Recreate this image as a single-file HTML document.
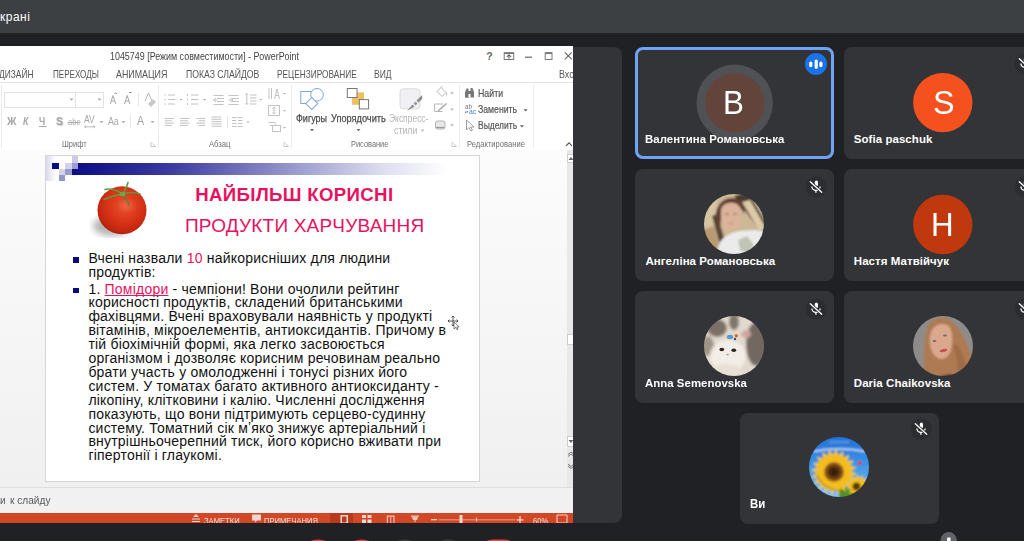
<!DOCTYPE html>
<html><head><meta charset="utf-8">
<style>
*{margin:0;padding:0;box-sizing:border-box}
html,body{width:1024px;height:541px;overflow:hidden;background:#202124;font-family:"Liberation Sans",sans-serif;position:relative}
.a{position:absolute}
.t{position:absolute;white-space:nowrap;line-height:1;transform-origin:0 0}
svg{position:absolute;overflow:visible}
</style></head><body>
<div class="a" style="left:0.00px;top:0.00px;width:1024.00px;height:33.00px;background:#3c4043"></div>
<div class="t" style="left:-7.20px;top:10.54px;font-size:12px;color:#fff;transform:scaleX(1.0);font-weight:400;letter-spacing:0.5px">екранi</div>
<div class="a" style="left:-10.00px;top:46.50px;width:632.00px;height:476.00px;background:#333438;border-radius:8px"></div>
<div class="a" style="left:0;top:0;width:573px;height:523px;overflow:hidden">
<div class="a" style="left:0.00px;top:46.00px;width:573.00px;height:477.00px;background:#fff"></div>
<div class="t" style="left:110.30px;top:51.21px;font-size:10.5px;color:#444;transform:scaleX(0.849);font-weight:400;">1045749 [Режим совместимости] - PowerPoint</div>
<div class="t" style="left:486.20px;top:50.91px;font-size:10.5px;color:#666;transform:scaleX(1.0);font-weight:700;">?</div>
<svg style="left:0;top:0" width="573" height="523"><rect x="504.2" y="52.8" width="9.5" height="6.7" fill="none" stroke="#777" stroke-width="1"/><path d="M504.2 53.2 h9.5" stroke="#777" stroke-width="1.6"/><path d="M508.95 58.8 v-4 M506.8 56.8 l2.15 -2.1 l2.15 2.1" fill="none" stroke="#666" stroke-width="1.1"/><path d="M525 57.2 H532" stroke="#666" stroke-width="1.2"/><rect x="545.2" y="52.7" width="6.8" height="6.8" fill="none" stroke="#777" stroke-width="1"/><path d="M545.2 53.3 H552" stroke="#777" stroke-width="1.5"/><path d="M564.8 52.3 L571.8 59.3 M571.8 52.3 L564.8 59.3" stroke="#666" stroke-width="1.1"/></svg>
<div class="t" style="left:-0.80px;top:68.91px;font-size:10.5px;color:#555;transform:scaleX(0.8);font-weight:400;">ДИЗАЙН</div>
<div class="t" style="left:52.60px;top:68.91px;font-size:10.5px;color:#555;transform:scaleX(0.77);font-weight:400;">ПЕРЕХОДЫ</div>
<div class="t" style="left:116.00px;top:68.91px;font-size:10.5px;color:#555;transform:scaleX(0.844);font-weight:400;">АНИМАЦИЯ</div>
<div class="t" style="left:185.60px;top:68.91px;font-size:10.5px;color:#555;transform:scaleX(0.825);font-weight:400;">ПОКАЗ СЛАЙДОВ</div>
<div class="t" style="left:276.80px;top:68.91px;font-size:10.5px;color:#555;transform:scaleX(0.79);font-weight:400;">РЕЦЕНЗИРОВАНИЕ</div>
<div class="t" style="left:374.40px;top:68.91px;font-size:10.5px;color:#555;transform:scaleX(0.81);font-weight:400;">ВИД</div>
<div class="t" style="left:559.00px;top:68.91px;font-size:10.5px;color:#555;transform:scaleX(0.85);font-weight:400;">Вход</div>
<div class="a" style="left:0.00px;top:82.00px;width:573.00px;height:1.00px;background:#e3e3e3"></div>
<div class="a" style="left:0.00px;top:149.50px;width:573.00px;height:1.00px;background:#d9d9d9"></div>
<div class="a" style="left:0.50px;top:85.00px;width:1.00px;height:63.00px;background:#ececec"></div>
<div class="a" style="left:158.00px;top:85.00px;width:1.00px;height:63.00px;background:#ececec"></div>
<div class="a" style="left:291.00px;top:85.00px;width:1.00px;height:63.00px;background:#ececec"></div>
<div class="a" style="left:459.00px;top:85.00px;width:1.00px;height:63.00px;background:#ececec"></div>
<div class="a" style="left:533.00px;top:85.00px;width:1.00px;height:63.00px;background:#ececec"></div>
<div class="a" style="left:3.50px;top:91.50px;width:72.00px;height:16.50px;border:1px solid #e2e2e2;background:#fff"></div>
<div class="a" style="left:75.00px;top:91.50px;width:29.00px;height:16.50px;border:1px solid #e2e2e2;background:#fff"></div>
<svg style="left:0;top:0" width="573" height="523"><path d="M69.5 98.5 h4 l-2 2.2z M97.5 98.5 h4 l-2 2.2z" fill="#aaa"/><path d="M99.5 121 h4 l-2 2.2z M121.5 121 h4 l-2 2.2z M150.5 121 h4 l-2 2.2z" fill="#b0b0b0"/><path d="M110.3 104 l2.7 -8.5 l2.7 8.5 M111.5 101 h3" fill="none" stroke="#a8a8a8" stroke-width="1"/><path d="M114.5 94 l1.2 -1.3 l1.2 1.3" fill="none" stroke="#888" stroke-width="0.9"/><path d="M124.5 104 l2.7 -8.5 l2.7 8.5 M125.7 101 h3" fill="none" stroke="#a8a8a8" stroke-width="1"/><path d="M129 92.5 h2.5" stroke="#888" stroke-width="1"/><path d="M138.5 93 v13" stroke="#e6e6e6" stroke-width="1"/><path d="M145 101 l3.5 -8 l3.5 8" fill="none" stroke="#b5b5b5" stroke-width="1"/><path d="M148 104 l5 -5 l3 3 l-5 5 z" fill="#c8c8c8"/><path d="M39 126.5 h7.5" stroke="#aaa" stroke-width="1"/><path d="M67.5 122.5 h13" stroke="#aaa" stroke-width="1"/><path d="M84.5 126.8 h10.5 M84.5 126.8 l1.6 -1.2 M84.5 126.8 l1.6 1.2 M95 126.8 l-1.6 -1.2 M95 126.8 l-1.6 1.2" fill="none" stroke="#aaa" stroke-width="0.8"/><path d="M130.5 115 v13" stroke="#e6e6e6" stroke-width="1"/><path d="M151 142 v4.5 h4.5 M152.5 143.5 l3 3" fill="none" stroke="#bbb" stroke-width="0.8"/><path d="M284 142 v4.5 h4.5 M285.5 143.5 l3 3" fill="none" stroke="#bbb" stroke-width="0.8"/><path d="M452 142 v4.5 h4.5 M453.5 143.5 l3 3" fill="none" stroke="#bbb" stroke-width="0.8"/></svg>
<div class="t" style="left:6.60px;top:116.49px;font-size:11px;color:#a5a5a5;transform:scaleX(0.95);font-weight:700;">Ж</div>
<div class="t" style="left:23.40px;top:116.49px;font-size:11px;color:#a5a5a5;transform:scaleX(0.8);font-weight:700;font-style:italic">К</div>
<div class="t" style="left:39.30px;top:115.99px;font-size:11px;color:#a8a8a8;transform:scaleX(0.8);font-weight:700;">Ч</div>
<div class="t" style="left:55.50px;top:116.07px;font-size:11.5px;color:#a5a5a5;transform:scaleX(0.9);font-weight:700;text-shadow:1px 1px 1px #ccc">S</div>
<div class="t" style="left:68.00px;top:117.88px;font-size:9px;color:#b0b0b0;transform:scaleX(0.85);font-weight:400;">abc</div>
<div class="t" style="left:84.40px;top:115.03px;font-size:10px;color:#a5a5a5;transform:scaleX(0.85);font-weight:400;">AV</div>
<div class="t" style="left:107.50px;top:116.49px;font-size:11px;color:#a8a8a8;transform:scaleX(0.8);font-weight:400;">Aa</div>
<div class="t" style="left:137.20px;top:115.22px;font-size:12.5px;color:#a0a0a0;transform:scaleX(0.85);font-weight:400;">A</div>
<div class="t" style="left:61.70px;top:139.68px;font-size:9px;color:#707070;transform:scaleX(0.83);font-weight:400;">Шрифт</div>
<svg style="left:0;top:0" width="573" height="523"><g stroke="#c2c2c2" stroke-width="1" fill="none"><path d="M164.5 95 h1.5 M168 95 h7"/><path d="M164.5 99.5 h1.5 M168 99.5 h7"/><path d="M164.5 104 h1.5 M168 104 h7"/><path d="M187.5 94 v2 M191 95 h7.5"/><path d="M187.5 98.5 v2 M191 99.5 h7.5"/><path d="M187.5 103 v2 M191 104 h7.5"/><path d="M213.5 95.5 h10 M217 98.5 h7 M217 101.5 h7 M213.5 104.5 h10 M213.5 100 l2.5 -2 M213.5 100 l2.5 2 M213.5 100 h4"/><path d="M228.5 95.5 h10 M232 98.5 h7 M232 101.5 h7 M228.5 104.5 h10 M233 100 l-2.5 -2 M233 100 l-2.5 2 M228.5 100 h4.5"/><path d="M250 95 h6.5 M250 98 h6.5 M250 101 h6.5 M250 104 h6.5 M246.8 93.5 v11 M245.3 95 l1.5 -1.5 l1.5 1.5 M245.3 103 l1.5 1.5 l1.5 -1.5"/><path d="M269 88 v11 M271.5 88 v11 M274.5 99 l2.5 -10 l2.5 10 M275.5 95.5 h3"/><rect x="268.5" y="105.5" width="11" height="10" /><path d="M274 107 v7 M272.5 108.5 l1.5 -1.5 l1.5 1.5 M272.5 112.5 l1.5 1.5 l1.5 -1.5"/><path d="M268.5 122.5 h6 l1.5 2 M270 125.5 h4"/><rect x="272.5" y="125.5" width="8" height="6"/><path d="M164.8 118.5 h9"/><path d="M164.8 120.8 h7"/><path d="M164.8 123.1 h9"/><path d="M164.8 125.4 h7"/><path d="M180 118.5 h9.5"/><path d="M180 120.8 h8.0"/><path d="M180 123.1 h9.5"/><path d="M180 125.4 h8.0"/><path d="M196.6 118.5 h8.5"/><path d="M198.6 120.8 h6.5"/><path d="M196.6 123.1 h8.5"/><path d="M198.6 125.4 h6.5"/><path d="M211.5 117 h10"/><path d="M211.5 119.3 h10"/><path d="M211.5 121.6 h10"/><path d="M211.5 123.9 h10"/><path d="M211.5 126.2 h10"/><path d="M227.5 116 v12" stroke="#e6e6e6"/><path d="M232 117.5 h4.5 M238 117.5 h4.5"/><path d="M232 120.5 h4.5 M238 120.5 h4.5"/><path d="M232 123.5 h4.5 M238 123.5 h4.5"/><path d="M232 126.5 h4.5 M238 126.5 h4.5"/></g><g fill="#aaa"><path d="M179.5 99 h3 l-1.5 1.6z M203 99 h3 l-1.5 1.6z M259.5 99 h3 l-1.5 1.6z M283 93 h3 l-1.5 1.6z M283 110 h3 l-1.5 1.6z M283 127 h3 l-1.5 1.6z M246.5 121.5 h3 l-1.5 1.6z"/></g></svg>
<div class="t" style="left:209.00px;top:139.68px;font-size:9px;color:#707070;transform:scaleX(0.85);font-weight:400;">Абзац</div>
<svg style="left:0;top:0" width="573" height="523"><rect x="300.8" y="91.5" width="12.3" height="12" fill="#fff" stroke="#7ea7d6" stroke-width="1"/><circle cx="317" cy="94.8" r="6.3" fill="#fff" stroke="#7ea7d6" stroke-width="1"/><rect x="307.5" y="99.2" width="8.5" height="8.5" fill="#fff" stroke="#7ea7d6" stroke-width="1" transform="rotate(45 311.75 103.45)"/><rect x="352" y="92.3" width="12" height="12.5" fill="#f0c060"/><rect x="347.3" y="88.5" width="9.7" height="9" fill="#fff" stroke="#777" stroke-width="1"/><rect x="359.3" y="99.6" width="9.3" height="9.3" fill="#fff" stroke="#777" stroke-width="1"/><rect x="400" y="88.8" width="20" height="20" rx="3.5" fill="#f0eff3" stroke="#dadada" stroke-width="1"/><path d="M407 111 L412.5 104.5 L414.5 106.5 Z" fill="#8c8c8c"/><path d="M413.5 103.5 l2 -2 l2 2 l-2 2z" fill="#9a9a9a"/><path d="M416.5 100.5 L422.2 95 L422.2 99 L418.5 102.5 Z" fill="#8c8c8c"/><path d="M437 91.5 l4 -4 l5 5 l-4 4 z M441 87.5 l1.5 -1.5" fill="#fff" stroke="#b8b8b8" stroke-width="1"/><path d="M446.3 92.5 q1 2 0 3" fill="none" stroke="#b8b8b8" stroke-width="1"/><path d="M443 104 h-8.5 v7.5 h8" fill="none" stroke="#b8b8b8" stroke-width="1"/><path d="M437.5 110.5 l8.5 -7.5 l1 1 l-8.5 7.5 z" fill="#a8a8a8"/><rect x="435.5" y="121" width="9.5" height="8" rx="2" fill="#e8e8e8" stroke="#b5b5b5" stroke-width="1"/><path d="M436 127.5 h8.5" stroke="#999" stroke-width="1.2"/><path d="M450 92.3 h4 l-2 2.2z M450 108.5 h4 l-2 2.2z M450 124.2 h4 l-2 2.2z" fill="#bbb"/><path d="M310 129 h4 l-2 2.2z M356.5 129 h4 l-2 2.2z" fill="#666"/><path d="M420.5 129.5 h4 l-2 2.2z" fill="#bbb"/></svg>
<div class="t" style="left:296.00px;top:113.49px;font-size:11px;color:#4a4a4a;transform:scaleX(0.82);font-weight:400;-webkit-text-stroke:0.25px #4a4a4a">Фигуры</div>
<div class="t" style="left:331.00px;top:113.49px;font-size:11px;color:#4a4a4a;transform:scaleX(0.837);font-weight:400;-webkit-text-stroke:0.25px #4a4a4a">Упорядочить</div>
<div class="t" style="left:388.90px;top:113.49px;font-size:11px;color:#b5b5b5;transform:scaleX(0.77);font-weight:400;">Экспресс-</div>
<div class="t" style="left:394.40px;top:124.69px;font-size:11px;color:#b5b5b5;transform:scaleX(0.8);font-weight:400;">стили</div>
<div class="t" style="left:350.60px;top:139.68px;font-size:9px;color:#707070;transform:scaleX(0.825);font-weight:400;">Рисование</div>
<svg style="left:0;top:0" width="573" height="523"><path d="M465 97.5 v-5 l1.5 -4 h2 v9.5z M470.5 97.5 v-9.5 h2 l1.5 4 v5.5z M468.5 91 h2 v3 h-2z" fill="#777"/><path d="M466.5 120 v10 l2.5 -2.5 l2 3.5 l1.5 -1 l-2 -3 h3.5 z" fill="#fff" stroke="#888" stroke-width="0.8"/><path d="M465 112 h3 l-1.2 -1.2 M465 112 l1.2 1.2" fill="none" stroke="#4a7bd0" stroke-width="0.8"/><path d="M523.5 109.3 h4.2 l-2.1 2.3z M519.8 125.3 h4.2 l-2.1 2.3z" fill="#666"/><path d="M566 145.8 l3 -3 l3 3" fill="none" stroke="#555" stroke-width="1.2"/></svg>
<div class="t" style="left:464.50px;top:103.07px;font-size:7px;color:#777;transform:scaleX(0.9);font-weight:400;">ab</div>
<div class="t" style="left:468.50px;top:108.45px;font-size:7.5px;color:#4a7bd0;transform:scaleX(0.9);font-weight:400;">ac</div>
<div class="t" style="left:477.70px;top:87.69px;font-size:11px;color:#555;transform:scaleX(0.8);font-weight:400;-webkit-text-stroke:0.2px #555">Найти</div>
<div class="t" style="left:477.70px;top:104.19px;font-size:11px;color:#555;transform:scaleX(0.79);font-weight:400;-webkit-text-stroke:0.2px #555">Заменить</div>
<div class="t" style="left:477.70px;top:120.19px;font-size:11px;color:#555;transform:scaleX(0.77);font-weight:400;-webkit-text-stroke:0.2px #555">Выделить</div>
<div class="t" style="left:466.60px;top:139.68px;font-size:9px;color:#707070;transform:scaleX(0.845);font-weight:400;">Редактирование</div>
<div class="a" style="left:0.00px;top:150.00px;width:573.00px;height:337.00px;background:linear-gradient(#fcfcfc,#f0f0f0)"></div>
<div class="a" style="left:566.50px;top:150.00px;width:6.50px;height:337.00px;background:#e8e8e8"></div>
<div class="a" style="left:566.60px;top:154.20px;width:7.00px;height:9.00px;background:#fff;border:1px solid #cfcfcf"></div>
<div class="a" style="left:566.60px;top:333.50px;width:7.00px;height:11.20px;background:#fff;border:1px solid #cfcfcf"></div>
<div class="a" style="left:566.60px;top:436.00px;width:7.00px;height:10.50px;background:#fff;border:1px solid #cfcfcf"></div>
<svg style="left:0;top:0" width="573" height="523"><path d="M568.5 160 l2.5 -3 l2.5 3z M568.5 440 l2.5 3 l2.5 -3z" fill="#666"/><path d="M568 454.5 l3 -2.5 l3 2.5 M568 456.5 l3 -2.5 l3 2.5 M568 464 l3 2.5 l3 -2.5 M568 466 l3 2.5 l3 -2.5" fill="none" stroke="#777" stroke-width="1"/></svg>
<div class="a" style="left:45.00px;top:155.00px;width:434.50px;height:326.50px;background:#fff;border:1px solid #d6d6d6"></div>
<div class="a" style="left:46.00px;top:156.00px;width:10.00px;height:25.00px;background:linear-gradient(90deg,#d9d9ee,#ffffff)"></div>
<div class="a" style="left:51.80px;top:163.00px;width:7.10px;height:6.20px;background:#0a0a82"></div>
<div class="a" style="left:71.80px;top:155.80px;width:6.10px;height:7.20px;background:#cbcbe6"></div>
<div class="a" style="left:65.40px;top:163.00px;width:6.40px;height:6.20px;background:#d2d2ea"></div>
<div class="a" style="left:71.80px;top:163.00px;width:6.10px;height:6.20px;background:#9d9dd0"></div>
<div class="a" style="left:59.00px;top:169.20px;width:6.40px;height:5.80px;background:#d3d3ea"></div>
<div class="a" style="left:65.40px;top:169.20px;width:6.40px;height:5.80px;background:#9a9acd"></div>
<div class="a" style="left:59.00px;top:175.00px;width:6.40px;height:6.00px;background:#9595ca"></div>
<div class="a" style="left:77.80px;top:163.00px;width:370.00px;height:6.20px;background:linear-gradient(90deg,#0c0c85 0%,#3a3aa0 25%,#8f8fc8 55%,#dcdcef 82%,#ffffff 100%)"></div>
<div class="a" style="left:71.80px;top:169.20px;width:376.00px;height:5.60px;background:linear-gradient(90deg,#0c0c85 0%,#3a3aa0 25%,#8f8fc8 55%,#dcdcef 82%,#ffffff 100%)"></div>
<svg style="left:0;top:0" width="573" height="523"><defs><radialGradient id="tg" cx="0.55" cy="0.4" r="0.65"><stop offset="0" stop-color="#e85230"/><stop offset="0.5" stop-color="#da3519"/><stop offset="0.85" stop-color="#c0260e"/><stop offset="1" stop-color="#9c1d0a"/></radialGradient><filter id="tb"><feGaussianBlur stdDeviation="3"/></filter><filter id="tb2"><feGaussianBlur stdDeviation="0.5"/></filter></defs><ellipse cx="112" cy="226" rx="19" ry="10" fill="#9c9c9c" opacity="0.75" filter="url(#tb)"/><ellipse cx="122" cy="210.3" rx="24.5" ry="24" fill="url(#tg)"/><ellipse cx="127" cy="206" rx="7" ry="5" fill="#f88a6a" opacity="0.35" filter="url(#tb)"/><g filter="url(#tb2)" fill="none" stroke="#5d9c3c" stroke-linecap="round"><path d="M122.5 194 C118 190 110 188 105 189.5" stroke-width="1.6"/><path d="M122.5 194 C126 190 127 186 128 182.5" stroke-width="1.6"/><path d="M122.5 194 C128 192 134 192 140 194" stroke-width="1.6"/><path d="M122.5 194 C116 195 110 197 104 199.5" stroke-width="1.4"/><path d="M122.5 194 C125 197 127 201 129 205" stroke-width="1.5" stroke="#4f8a30"/></g><ellipse cx="122.5" cy="194" rx="3" ry="2.2" fill="#6aa84a"/></svg>
<div class="t" style="left:195.20px;top:185.56px;font-size:18.6px;color:#e8115f;transform:scaleX(1.0);font-weight:700;letter-spacing:0.35px">НАЙБІЛЬШ КОРИСНІ</div>
<div class="t" style="left:184.90px;top:216.42px;font-size:19px;color:#e8115f;transform:scaleX(1.0);font-weight:400;letter-spacing:0.2px">ПРОДУКТИ ХАРЧУВАННЯ</div>
<div class="a" style="left:72.70px;top:257.10px;width:6.20px;height:5.60px;background:#0a0a80"></div>
<div class="a" style="left:72.70px;top:287.60px;width:6.20px;height:5.40px;background:#0a0a80"></div>
<div class="t" style="left:88.40px;top:251.05px;font-size:14px;color:#111;transform:scaleX(1.0);font-weight:400;letter-spacing:0.21px">Вчені назвали <span style="color:#e8115f">10</span> найкорисніших для людини</div>
<div class="t" style="left:88.40px;top:264.55px;font-size:14px;color:#111;transform:scaleX(1.0);font-weight:400;letter-spacing:0.21px">продуктів:</div>
<div class="t" style="left:88.40px;top:281.55px;font-size:14px;color:#111;transform:scaleX(1.0);font-weight:400;letter-spacing:0.21px">1. <span style="color:#e8115f;text-decoration:underline;text-decoration-thickness:1.2px;text-underline-offset:1.3px;text-decoration-skip-ink:none">Помідори</span> - чемпіони! Вони очолили рейтинг</div>
<div class="t" style="left:88.40px;top:295.45px;font-size:14px;color:#111;transform:scaleX(1.0);font-weight:400;letter-spacing:0.21px">корисності продуктів, складений британськими</div>
<div class="t" style="left:88.40px;top:309.35px;font-size:14px;color:#111;transform:scaleX(1.0);font-weight:400;letter-spacing:0.21px">фахівцями. Вчені враховували наявність у продукті</div>
<div class="t" style="left:88.40px;top:323.25px;font-size:14px;color:#111;transform:scaleX(1.0);font-weight:400;letter-spacing:0.21px">вітамінів, мікроелементів, антиоксидантів. Причому в</div>
<div class="t" style="left:88.40px;top:337.15px;font-size:14px;color:#111;transform:scaleX(1.0);font-weight:400;letter-spacing:0.21px">тій біохімічній формі, яка легко засвоюється</div>
<div class="t" style="left:88.40px;top:351.05px;font-size:14px;color:#111;transform:scaleX(1.0);font-weight:400;letter-spacing:0.21px">організмом і дозволяє корисним речовинам реально</div>
<div class="t" style="left:88.40px;top:364.95px;font-size:14px;color:#111;transform:scaleX(1.0);font-weight:400;letter-spacing:0.21px">брати участь у омолодженні і тонусі різних його</div>
<div class="t" style="left:88.40px;top:378.85px;font-size:14px;color:#111;transform:scaleX(1.0);font-weight:400;letter-spacing:0.21px">систем. У томатах багато активного антиоксиданту -</div>
<div class="t" style="left:88.40px;top:392.75px;font-size:14px;color:#111;transform:scaleX(1.0);font-weight:400;letter-spacing:0.21px">лікопіну, клітковини і калію. Численні дослідження</div>
<div class="t" style="left:88.40px;top:406.65px;font-size:14px;color:#111;transform:scaleX(1.0);font-weight:400;letter-spacing:0.21px">показують, що вони підтримують серцево-судинну</div>
<div class="t" style="left:88.40px;top:420.55px;font-size:14px;color:#111;transform:scaleX(1.0);font-weight:400;letter-spacing:0.21px">систему. Томатний сік мʼяко знижує артеріальний і</div>
<div class="t" style="left:88.40px;top:434.45px;font-size:14px;color:#111;transform:scaleX(1.0);font-weight:400;letter-spacing:0.21px">внутрішньочерепний тиск, його корисно вживати при</div>
<div class="t" style="left:88.40px;top:448.35px;font-size:14px;color:#111;transform:scaleX(1.0);font-weight:400;letter-spacing:0.21px">гіпертонії і глаукомі.</div>
<svg style="left:0;top:0" width="573" height="523"><path d="M453 316 v10 M448 321 h10 M451.5 317.5 l1.5 -1.5 l1.5 1.5 M451.5 324.5 l1.5 1.5 l1.5 -1.5 M449.5 319.5 l-1.5 1.5 l1.5 1.5 M456.5 319.5 l1.5 1.5 l-1.5 1.5" stroke="#333" stroke-width="0.8" fill="none"/><path d="M454 322 v7 l1.7 -1.7 l1.3 2.5 l1 -0.5 l-1.2 -2.4 h2.4z" fill="#fff" stroke="#333" stroke-width="0.6"/></svg>
<div class="a" style="left:0.00px;top:487.00px;width:573.00px;height:1.00px;background:#dedede"></div>
<div class="a" style="left:0.00px;top:488.00px;width:573.00px;height:24.50px;background:#f1f1f1"></div>
<div class="t" style="left:-33.31px;top:494.69px;font-size:11px;color:#5a5a5a;transform:scaleX(0.92);font-weight:400;">Заметки</div>
<div class="t" style="left:9.70px;top:494.69px;font-size:11px;color:#5a5a5a;transform:scaleX(0.92);font-weight:400;">к слайду</div>
<div class="a" style="left:0.00px;top:512.50px;width:573.00px;height:10.50px;background:#d24726"></div>
<div class="a" style="left:330.00px;top:512.50px;width:23.40px;height:10.50px;background:#b93a1c"></div>
<svg style="left:0;top:0" width="573" height="523"><g fill="#f5d5cb"><path d="M192 521 h8 v1 h-8z M192 518.5 h8 v1 h-8z M193 517 l3 -3 l3 3z"/><path d="M252 514.5 h9 v6 h-4 l-2 2 v-2 h-3z"/><path d="M340.5 515 h7.5 v8 h-7.5z M342 516.5 v6 h4.5 v-6z" fill="#f5d5cb" fill-rule="evenodd"/><path d="M362 515 h4 v3 h-4z M367.5 515 h4 v3 h-4z M362 519.5 h4 v3.5 h-4z M367.5 519.5 h4 v3.5 h-4z"/><path d="M386.8 515.5 h7.8 v7.5 h-7.8z M388 516.7 v6.3 h2.2 v-6.3z M391.2 516.7 v6.3 h2.2 v-6.3z" fill-rule="evenodd" opacity="0.85"/><path d="M411 515.5 h8 v1.3 h-8z M412 517 h6 l-1 3 h-4z M414.5 520 h1 v2 h-1z" opacity="0.9"/><path d="M431 519 h6 v1.3 h-6z"/><path d="M438.5 519.5 h76.5 v0.8 h-76.5z" opacity="0.85"/><path d="M459.5 515 h3 v8 h-3z"/><path d="M476 517.5 h0.9 v4 h-0.9z"/><path d="M516.5 519.2 h7 v1.3 h-7z M519.4 516 h1.3 v7.5 h-1.3z"/><path d="M557 515 h10 v8 h-10z" fill="none" stroke="#f5d5cb" stroke-width="1"/></g></svg>
<div class="t" style="left:203.80px;top:516.46px;font-size:9.5px;color:#f8e0d8;transform:scaleX(0.8);font-weight:400;">ЗАМЕТКИ</div>
<div class="t" style="left:264.00px;top:516.46px;font-size:9.5px;color:#f8e0d8;transform:scaleX(0.8);font-weight:400;">ПРИМЕЧАНИЯ</div>
<div class="t" style="left:533.30px;top:516.46px;font-size:9.5px;color:#f8e0d8;transform:scaleX(0.8);font-weight:400;">60%</div>
</div>
<div class="a" style="left:635.00px;top:47.00px;width:199.00px;height:111.50px;background:#333438;border-radius:8px"></div>
<div class="a" style="left:844.00px;top:47.00px;width:199.00px;height:111.50px;background:#333438;border-radius:8px"></div>
<div class="a" style="left:635.00px;top:169.00px;width:199.00px;height:111.50px;background:#333438;border-radius:8px"></div>
<div class="a" style="left:844.00px;top:169.00px;width:199.00px;height:111.50px;background:#333438;border-radius:8px"></div>
<div class="a" style="left:635.00px;top:291.00px;width:199.00px;height:111.50px;background:#333438;border-radius:8px"></div>
<div class="a" style="left:844.00px;top:291.00px;width:199.00px;height:111.50px;background:#333438;border-radius:8px"></div>
<div class="a" style="left:740.00px;top:412.50px;width:199.00px;height:111.50px;background:#333438;border-radius:8px"></div>
<div class="a" style="left:635.00px;top:46.50px;width:199.30px;height:112.00px;border:3px solid #6ea3f6;border-radius:8px"></div>
<svg style="left:0;top:0" width="1024" height="541"><circle cx="734.7" cy="102.8" r="38.2" fill="#505155"/><circle cx="734.7" cy="102.8" r="29.6" fill="#63443a"/><circle cx="816" cy="64" r="11" fill="#1a73e8"/><g stroke="#fff" stroke-width="3.2" stroke-linecap="round"><path d="M810.8 63.2 v2.4 M816.2 61 v6.2 M820.9 63.2 v2.4"/></g></svg>
<div class="t" style="left:723.20px;top:85.57px;font-size:33px;color:#fff;transform:scaleX(0.95);font-weight:400;">В</div>
<div class="t" style="left:645.40px;top:134.27px;font-size:11.5px;color:#fff;transform:scaleX(0.99);font-weight:700;letter-spacing:0.05px">Валентина Романовська</div>
<svg style="left:0;top:0" width="1024" height="541"><circle cx="942.8" cy="102.6" r="29.7" fill="#f4511e"/><circle cx="942.8" cy="224.5" r="29.7" fill="#bf380e"/></svg>
<div class="t" style="left:932.90px;top:85.57px;font-size:33px;color:#fff;transform:scaleX(0.98);font-weight:400;">S</div>
<div class="t" style="left:853.80px;top:134.27px;font-size:11.5px;color:#fff;transform:scaleX(1.0);font-weight:700;letter-spacing:0.05px">Sofia paschuk</div>
<svg style="left:1013.50px;top:53.00px" width="22" height="22" viewBox="0 0 22 22"><circle cx="11" cy="11" r="10.5" fill="#2c2d30"/><path d="M9.8 9.8 V6.2 a1.6 1.6 0 0 1 3.2 0 V9.8z" fill="#fff"/><path d="M6.9 10.4 a4.1 3.9 0 0 0 8.2 0" fill="none" stroke="#fff" stroke-width="1.3"/><path d="M10.9 14.2 v2.6" stroke="#fff" stroke-width="1.3"/><path d="M5.3 5.7 L16.7 16.3" stroke="#2c2d30" stroke-width="2.8"/><path d="M5.3 5.7 L16.7 16.3" stroke="#fff" stroke-width="1.3" stroke-linecap="round"/></svg>
<svg style="left:805.10px;top:175.50px" width="22" height="22" viewBox="0 0 22 22"><circle cx="11" cy="11" r="10.5" fill="#2c2d30"/><path d="M9.8 9.8 V6.2 a1.6 1.6 0 0 1 3.2 0 V9.8z" fill="#fff"/><path d="M6.9 10.4 a4.1 3.9 0 0 0 8.2 0" fill="none" stroke="#fff" stroke-width="1.3"/><path d="M10.9 14.2 v2.6" stroke="#fff" stroke-width="1.3"/><path d="M5.3 5.7 L16.7 16.3" stroke="#2c2d30" stroke-width="2.8"/><path d="M5.3 5.7 L16.7 16.3" stroke="#fff" stroke-width="1.3" stroke-linecap="round"/></svg>
<svg style="left:704.4px;top:194.2px" width="60" height="60" viewBox="0 0 60 60"><defs><clipPath id="c1"><circle cx="30" cy="30" r="30"/></clipPath><filter id="bl1"><feGaussianBlur stdDeviation="0.9"/></filter></defs><g clip-path="url(#c1)"><g filter="url(#bl1)"><rect x="-5" y="-5" width="70" height="70" fill="#cdb895"/><rect x="-5" y="-5" width="18" height="70" fill="#d6c4a2"/><path d="M30 2 L44 -2 L66 36 L60 42 Z" fill="#4c3b2e"/><path d="M38 8 L46 6 L62 34 L56 38 Z" fill="#dbc9a8"/><path d="M8 22 L13 20 L22 50 L16 52 Z" fill="#5a4636"/><path d="M-2 36 L10 32 L18 66 L-2 66Z" fill="#b89a70"/><path d="M12 30 C10 18 14 6 26 4 C36 3 42 10 40 20 L38 16 C34 10 22 10 18 16 L16 34Z" fill="#5e4030"/><path d="M17 16 C18 10 24 8 30 9 C36 10 38 16 37 24 C36 32 32 37 26 37 C20 36 17 30 17 24Z" fill="#dcb39b"/><path d="M21 20 h4 M29 20 h4" stroke="#8a6050" stroke-width="1"/><path d="M24 29 q3 1.5 6 0" stroke="#c08878" stroke-width="1" fill="none"/><path d="M10 66 L16 48 C22 40 30 38 36 37 C46 36 54 36 62 38 L64 66Z" fill="#ebebeb"/><path d="M34 46 l9 -4 l7 9 l-6 8 l-8 -3z" fill="#b4bca6" opacity="0.8"/></g></g></svg>
<div class="t" style="left:645.40px;top:256.37px;font-size:11.5px;color:#fff;transform:scaleX(1.0);font-weight:700;letter-spacing:0.05px">Ангеліна Романовська</div>
<svg style="left:1013.50px;top:175.50px" width="22" height="22" viewBox="0 0 22 22"><circle cx="11" cy="11" r="10.5" fill="#2c2d30"/><path d="M9.8 9.8 V6.2 a1.6 1.6 0 0 1 3.2 0 V9.8z" fill="#fff"/><path d="M6.9 10.4 a4.1 3.9 0 0 0 8.2 0" fill="none" stroke="#fff" stroke-width="1.3"/><path d="M10.9 14.2 v2.6" stroke="#fff" stroke-width="1.3"/><path d="M5.3 5.7 L16.7 16.3" stroke="#2c2d30" stroke-width="2.8"/><path d="M5.3 5.7 L16.7 16.3" stroke="#fff" stroke-width="1.3" stroke-linecap="round"/></svg>
<div class="t" style="left:931.30px;top:207.57px;font-size:33px;color:#fff;transform:scaleX(0.95);font-weight:400;">Н</div>
<div class="t" style="left:853.80px;top:256.37px;font-size:11.5px;color:#fff;transform:scaleX(1.0);font-weight:700;letter-spacing:0.05px">Настя Матвійчук</div>
<svg style="left:805.10px;top:297.50px" width="22" height="22" viewBox="0 0 22 22"><circle cx="11" cy="11" r="10.5" fill="#2c2d30"/><path d="M9.8 9.8 V6.2 a1.6 1.6 0 0 1 3.2 0 V9.8z" fill="#fff"/><path d="M6.9 10.4 a4.1 3.9 0 0 0 8.2 0" fill="none" stroke="#fff" stroke-width="1.3"/><path d="M10.9 14.2 v2.6" stroke="#fff" stroke-width="1.3"/><path d="M5.3 5.7 L16.7 16.3" stroke="#2c2d30" stroke-width="2.8"/><path d="M5.3 5.7 L16.7 16.3" stroke="#fff" stroke-width="1.3" stroke-linecap="round"/></svg>
<svg style="left:704.4px;top:316.2px" width="60" height="60" viewBox="0 0 60 60"><defs><clipPath id="c2"><circle cx="30" cy="30" r="30"/></clipPath><filter id="bl2"><feGaussianBlur stdDeviation="1.6"/></filter><filter id="bl2b"><feGaussianBlur stdDeviation="0.6"/></filter></defs><g clip-path="url(#c2)"><g filter="url(#bl2)"><rect x="-5" y="-5" width="70" height="70" fill="#e2d9ce"/><ellipse cx="13" cy="12" rx="10" ry="9" fill="#7c7066"/><ellipse cx="30" cy="6" rx="5" ry="8" fill="#807468"/><ellipse cx="52" cy="28" rx="10" ry="22" fill="#72685e"/><ellipse cx="4" cy="30" rx="6" ry="10" fill="#a09486"/><ellipse cx="24" cy="40" rx="18" ry="16" fill="#f2ede6"/><ellipse cx="22" cy="56" rx="16" ry="8" fill="#e8e0d4"/><ellipse cx="42" cy="18" rx="5" ry="4" fill="#cfa8a0"/></g><g filter="url(#bl2b)"><ellipse cx="17.8" cy="33.5" rx="2.4" ry="1.7" fill="#2a2622"/><ellipse cx="29.8" cy="34.2" rx="2.4" ry="1.7" fill="#2a2622"/><ellipse cx="23.5" cy="38.6" rx="1.3" ry="0.9" fill="#c89a94"/><ellipse cx="26" cy="21" rx="3.2" ry="2.2" fill="#5a9ccc"/><circle cx="32.3" cy="19.8" r="1.7" fill="#d86a2a"/><circle cx="31" cy="23" r="1.2" fill="#3a4a8a"/></g></g></svg>
<div class="t" style="left:645.40px;top:378.37px;font-size:11.5px;color:#fff;transform:scaleX(0.99);font-weight:700;letter-spacing:0.05px">Anna Semenovska</div>
<svg style="left:1013.50px;top:297.50px" width="22" height="22" viewBox="0 0 22 22"><circle cx="11" cy="11" r="10.5" fill="#2c2d30"/><path d="M9.8 9.8 V6.2 a1.6 1.6 0 0 1 3.2 0 V9.8z" fill="#fff"/><path d="M6.9 10.4 a4.1 3.9 0 0 0 8.2 0" fill="none" stroke="#fff" stroke-width="1.3"/><path d="M10.9 14.2 v2.6" stroke="#fff" stroke-width="1.3"/><path d="M5.3 5.7 L16.7 16.3" stroke="#2c2d30" stroke-width="2.8"/><path d="M5.3 5.7 L16.7 16.3" stroke="#fff" stroke-width="1.3" stroke-linecap="round"/></svg>
<svg style="left:913px;top:316.2px" width="60" height="60" viewBox="0 0 60 60"><defs><clipPath id="c3"><circle cx="30" cy="30" r="30"/></clipPath><filter id="bl3"><feGaussianBlur stdDeviation="1.3"/></filter><filter id="bl3b"><feGaussianBlur stdDeviation="0.6"/></filter></defs><g clip-path="url(#c3)"><g filter="url(#bl3)"><rect x="-5" y="-5" width="70" height="70" fill="#8e8c8a"/><path d="M12 66 C10 44 10 20 16 8 C22 0 34 0 40 6 C50 16 58 34 62 50 L62 66Z" fill="#ad7a52"/><path d="M44 8 C52 14 58 22 60 30 L66 30 L66 -5 L40 -5Z" fill="#8e8c8a"/><path d="M19 14 C22 8 30 6 36 10 C40 16 40 26 38 34 C36 40 32 43 28 43 C22 42 18 36 17 28 C16 22 17 18 19 14Z" fill="#dba88e"/><path d="M40 30 C44 40 46 52 44 66 L56 66 C56 52 50 38 44 28Z" fill="#a06c46"/><path d="M28 60 L38 58 L40 66 L26 66Z" fill="#3a2c2c"/></g><g filter="url(#bl3b)"><ellipse cx="30.5" cy="34.5" rx="3.8" ry="1.5" fill="#c8504e" transform="rotate(-12 30.5 34.5)"/><ellipse cx="21.5" cy="25" rx="2" ry="1" fill="#6a6a7a"/><ellipse cx="32" cy="19.5" rx="2" ry="1" fill="#6a6a7a"/></g></g></svg>
<div class="t" style="left:853.80px;top:378.37px;font-size:11.5px;color:#fff;transform:scaleX(1.0);font-weight:700;letter-spacing:0.05px">Daria Chaikovska</div>
<svg style="left:910.00px;top:418.40px" width="22" height="22" viewBox="0 0 22 22"><circle cx="11" cy="11" r="10.5" fill="#2c2d30"/><path d="M9.8 9.8 V6.2 a1.6 1.6 0 0 1 3.2 0 V9.8z" fill="#fff"/><path d="M6.9 10.4 a4.1 3.9 0 0 0 8.2 0" fill="none" stroke="#fff" stroke-width="1.3"/><path d="M10.9 14.2 v2.6" stroke="#fff" stroke-width="1.3"/><path d="M5.3 5.7 L16.7 16.3" stroke="#2c2d30" stroke-width="2.8"/><path d="M5.3 5.7 L16.7 16.3" stroke="#fff" stroke-width="1.3" stroke-linecap="round"/></svg>
<svg style="left:808.8px;top:437.2px" width="60" height="60" viewBox="0 0 60 60"><defs><clipPath id="c4"><circle cx="30" cy="30" r="30"/></clipPath><linearGradient id="sky" x1="0" y1="0" x2="0" y2="1"><stop offset="0" stop-color="#1d68d4"/><stop offset="0.45" stop-color="#3a94e6"/><stop offset="1" stop-color="#8ccaf2"/></linearGradient><radialGradient id="sfc" cx="0.5" cy="0.5" r="0.5"><stop offset="0" stop-color="#2e1804"/><stop offset="0.45" stop-color="#4a2a0c"/><stop offset="0.8" stop-color="#8a5418"/><stop offset="1" stop-color="#a06a20"/></radialGradient><filter id="bl4"><feGaussianBlur stdDeviation="1.0"/></filter></defs><g clip-path="url(#c4)"><g filter="url(#bl4)"><rect x="-5" y="-5" width="70" height="70" fill="url(#sky)"/><path d="M5 14.5 C20 11.5 40 11.5 56 14.5" stroke="#e8f4fc" stroke-width="1.6" fill="none" opacity="0.85"/><path d="M20 5 h20" stroke="#cfe4f6" stroke-width="0.8" opacity="0.7"/><path d="M30 52 C36 48 44 50 50 58 L30 66Z" fill="#4f8f2c"/><polygon points="60.8,51.4 56.3,52.3 58.6,56.3 54.1,55.1 54.5,59.7 51.0,56.8 49.3,61.0 47.4,56.8 44.1,59.9 44.2,55.4 39.8,56.7 41.9,52.6 37.4,52.0 41.0,49.2 37.2,46.6 41.7,45.7 39.4,41.7 43.9,42.9 43.5,38.3 47.0,41.2 48.7,37.0 50.6,41.2 53.9,38.1 53.8,42.6 58.2,41.3 56.1,45.4 60.6,46.0 57.0,48.8" fill="#f2c020"/><circle cx="47.5" cy="49.5" r="4" fill="#5a3a10"/><polygon points="47.9,37.3 41.4,39.3 46.1,44.3 39.3,44.2 42.2,50.3 35.8,48.2 36.6,54.9 31.2,50.8 29.9,57.5 26.0,52.0 22.7,57.9 20.7,51.4 15.7,56.1 15.8,49.3 9.7,52.2 11.8,45.8 5.1,46.6 9.2,41.2 2.5,39.9 8.0,36.0 2.1,32.7 8.6,30.7 3.9,25.7 10.7,25.8 7.8,19.7 14.2,21.8 13.4,15.1 18.8,19.2 20.1,12.5 24.0,18.0 27.3,12.1 29.3,18.6 34.3,13.9 34.2,20.7 40.3,17.8 38.2,24.2 44.9,23.4 40.8,28.8 47.5,30.1 42.0,34.0" fill="#f7c51c"/><circle cx="25" cy="35" r="17" fill="#f4bc1a"/><circle cx="25" cy="35" r="10" fill="url(#sfc)"/><path d="M8 38 C12 48 22 54 36 54" stroke="#6a5a18" stroke-width="1.2" fill="none" opacity="0.6"/><circle cx="50.8" cy="25.9" r="2" fill="#d82424"/></g></g></svg>
<div class="t" style="left:750.20px;top:497.64px;font-size:12px;color:#fff;transform:scaleX(0.95);font-weight:700;">Ви</div>
<svg style="left:0;top:0" width="1024" height="541"><circle cx="318.1" cy="559.5" r="20" fill="#ea4335"/><circle cx="361.5" cy="559.5" r="20" fill="#ea4335"/><circle cx="404.8" cy="559.5" r="20" fill="#3c4043"/><circle cx="448.2" cy="559.5" r="20" fill="#3c4043"/><rect x="478" y="539.5" width="41" height="30" rx="15" fill="#ea4335"/><circle cx="948.7" cy="540.3" r="8.2" fill="#5f6368"/><rect x="947" y="537.5" width="3.6" height="4" rx="1" fill="#fff"/></svg>
</body></html>
